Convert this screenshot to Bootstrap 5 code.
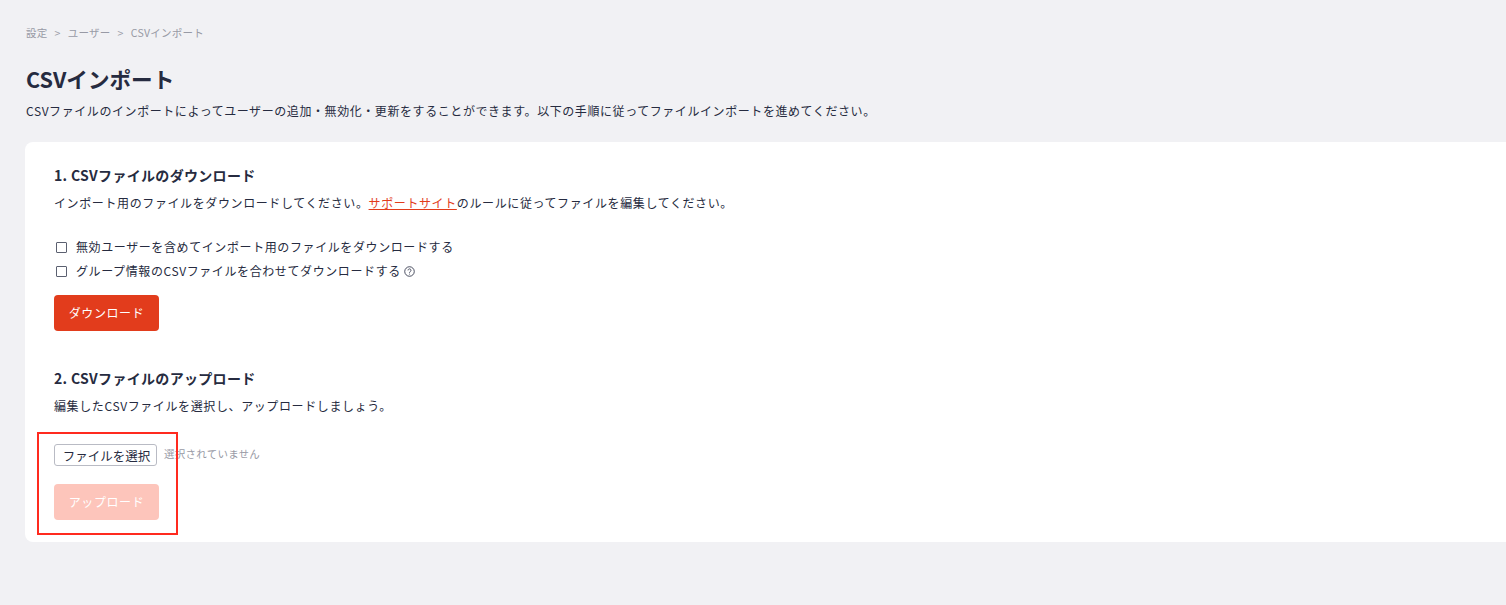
<!DOCTYPE html>
<html lang="ja">
<head>
<meta charset="utf-8">
<title>CSVインポート</title>
<link href="https://cdn.jsdelivr.net/npm/bootstrap@5.3.0/dist/css/bootstrap.min.css" rel="stylesheet">
<style>
html,body{height:605px;overflow:hidden}
body{background:#f1f1f4;color:#262b40;font-family:"Noto Sans CJK JP","Noto Sans",sans-serif;font-size:12px;line-height:18px;position:relative;letter-spacing:.575px}
.page-wrap{padding:24px 0 0 26px}
.crumbs{font-size:10.5px;line-height:18px;color:#989aa5;margin-bottom:21px;gap:7px;letter-spacing:.28px}
.page-title{font-size:21.6px;font-weight:700;line-height:32px;margin:0 0 7px;letter-spacing:0}
.lead-text{margin:0 0 22px}
.panel{background:#fff;border-radius:8px 0 0 8px;margin-left:-1px;padding:23px 29px 22px;height:400px}
.step-title{font-size:14px;font-weight:700;line-height:20px;margin:0 0 9px;letter-spacing:.32px}
.step-text{margin:0 0 23px;letter-spacing:.61px}
.support-link{color:#e23c1c}
.check-row{gap:9px;height:24px;letter-spacing:.6px}
.box{width:11px;height:11px;border:1px solid #5b6070;border-radius:1px;margin-left:2px;flex:none}
.help-ico{width:11px;height:11px;margin:0 0 3px 3px}
.btn-act{width:105px;height:36px;font-size:12px;border-radius:4px;border:0;color:#fff;background:#e23c1c;padding:0;letter-spacing:.6px}
.btn-act:disabled{background:#fdc5bb;color:#fff;opacity:1}
.file-btn{width:103px;height:22px;border:1px solid #b9bbc4;border-radius:3px;background:#fff;color:#262b40;font-size:12.5px;line-height:22px;padding:0 0 0 2px;letter-spacing:0;text-align:center}
.file-note{color:#989aa5;font-size:10.5px;margin-left:7px;position:relative;top:-1px;letter-spacing:.25px}
.annot{position:absolute;left:37px;top:432px;width:141px;height:103px;border:2px solid #ff2a1f}
.step-two{margin-top:37px;margin-bottom:9px}
.file-row{margin:29px 0 18px}
.check-last{margin-bottom:12px}
</style>
</head>
<body>
<div class="page-wrap">
  <nav class="crumbs d-flex"><span>設定</span><span>&gt;</span><span>ユーザー</span><span>&gt;</span><span>CSVインポート</span></nav>
  <h1 class="page-title">CSVインポート</h1>
  <p class="lead-text">CSVファイルのインポートによってユーザーの追加・無効化・更新をすることができます。以下の手順に従ってファイルインポートを進めてください。</p>
  <div class="panel">
    <h2 class="step-title">1. CSVファイルのダウンロード</h2>
    <p class="step-text">インポート用のファイルをダウンロードしてください。<a class="support-link" href="#">サポートサイト</a>のルールに従ってファイルを編集してください。</p>
    <div class="check-row d-flex align-items-center"><span class="box"></span><span>無効ユーザーを含めてインポート用のファイルをダウンロードする</span></div>
    <div class="check-row check-last d-flex align-items-center"><span class="box"></span><span>グループ情報のCSVファイルを合わせてダウンロードする<svg class="help-ico" viewBox="0 0 12 12" fill="none" stroke="#262b40" stroke-width=".9"><circle cx="6" cy="6" r="5.2"/><path d="M4.4 4.8a1.6 1.6 0 1 1 2.5 1.3c-.6.4-.9.7-.9 1.3"/><path d="M6 8.4v.9"/></svg></span></div>
    <button class="btn btn-act d-block" type="button">ダウンロード</button>
    <h2 class="step-title step-two">2. CSVファイルのアップロード</h2>
    <p class="step-text mb-0">編集したCSVファイルを選択し、アップロードしましょう。</p>
    <div class="d-flex align-items-center file-row"><button class="file-btn" type="button">ファイルを選択</button><span class="file-note">選択されていません</span></div>
    <button class="btn btn-act d-block" type="button" disabled>アップロード</button>
  </div>
</div>
<div class="annot"></div>
</body>
</html>
